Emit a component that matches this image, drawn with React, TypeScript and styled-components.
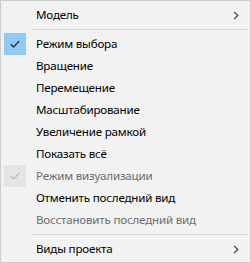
import React from "react";
import styled, { createGlobalStyle } from "styled-components";

const Global = createGlobalStyle`
  html, body { margin: 0; padding: 0; background: #ffffff; }
  #root { width: 251px; height: 263px; }
`;

const Menu = styled.div`
  box-sizing: border-box;
  width: 251px;
  height: 263px;
  border: 1px solid #cccccc;
  background: #f2f2f2;
  padding: 3px 2px 2px 3px;
  display: flex;
  flex-direction: column;
  font-family: "Noto Sans", "Open Sans", sans-serif;
  font-size: 11.6px;
  letter-spacing: -0.2px;
`;

const Item = styled.div<{ $disabled?: boolean }>`
  height: 22px;
  display: flex;
  align-items: center;
  color: ${(p) => (p.$disabled ? "#6d6d6d" : "#000000")};
  white-space: nowrap;
`;

const Gutter = styled.div<{ $state?: "on" | "off" }>`
  width: 22px;
  height: 22px;
  flex: none;
  margin-right: 10px;
  display: flex;
  align-items: center;
  justify-content: center;
  background: ${(p) =>
    p.$state === "on" ? "#90c8f6" : p.$state === "off" ? "#e5e5e5" : "transparent"};
`;

const Label = styled.span`
  flex: 1;
  line-height: 22px;
`;

const Arrow = styled.span`
  width: 6px;
  margin-right: 9px;
  display: flex;
  align-items: center;
`;

const Separator = styled.div`
  height: 7px;
  display: flex;
  align-items: center;
  padding-left: 28px;
  &::after {
    content: "";
    flex: 1;
    height: 1px;
    background: #d7d7d7;
  }
`;

const Check = ({ color }: { color: string }) => (
  <svg width="10" height="8" viewBox="0 0 10 8">
    <path d="M0.8 4.2 L3.6 7 L9.2 1" fill="none" stroke={color} strokeWidth="1.3" />
  </svg>
);

const Chevron = () => (
  <svg width="6" height="9" viewBox="0 0 6 9">
    <path d="M1 0.8 L4.8 4.5 L1 8.2" fill="none" stroke="#333333" strokeWidth="1.1" />
  </svg>
);

type Entry =
  | { kind: "sep" }
  | { kind: "item"; label: string; sub?: boolean; check?: "on" | "off"; disabled?: boolean };

const entries: Entry[] = [
  { kind: "item", label: "Модель", sub: true },
  { kind: "sep" },
  { kind: "item", label: "Режим выбора", check: "on" },
  { kind: "item", label: "Вращение" },
  { kind: "item", label: "Перемещение" },
  { kind: "item", label: "Масштабирование" },
  { kind: "item", label: "Увеличение рамкой" },
  { kind: "item", label: "Показать всё" },
  { kind: "item", label: "Режим визуализации", check: "off", disabled: true },
  { kind: "item", label: "Отменить последний вид" },
  { kind: "item", label: "Восстановить последний вид", disabled: true },
  { kind: "sep" },
  { kind: "item", label: "Виды проекта", sub: true },
];

export default function App() {
  return (
    <>
      <Global />
      <Menu>
        {entries.map((e, i) =>
          e.kind === "sep" ? (
            <Separator key={i} />
          ) : (
            <Item key={i} $disabled={e.disabled}>
              <Gutter $state={e.check}>
                {e.check && <Check color={e.check === "on" ? "#333333" : "#bdbdbd"} />}
              </Gutter>
              <Label>{e.label}</Label>
              {e.sub && (
                <Arrow>
                  <Chevron />
                </Arrow>
              )}
            </Item>
          )
        )}
      </Menu>
    </>
  );
}
